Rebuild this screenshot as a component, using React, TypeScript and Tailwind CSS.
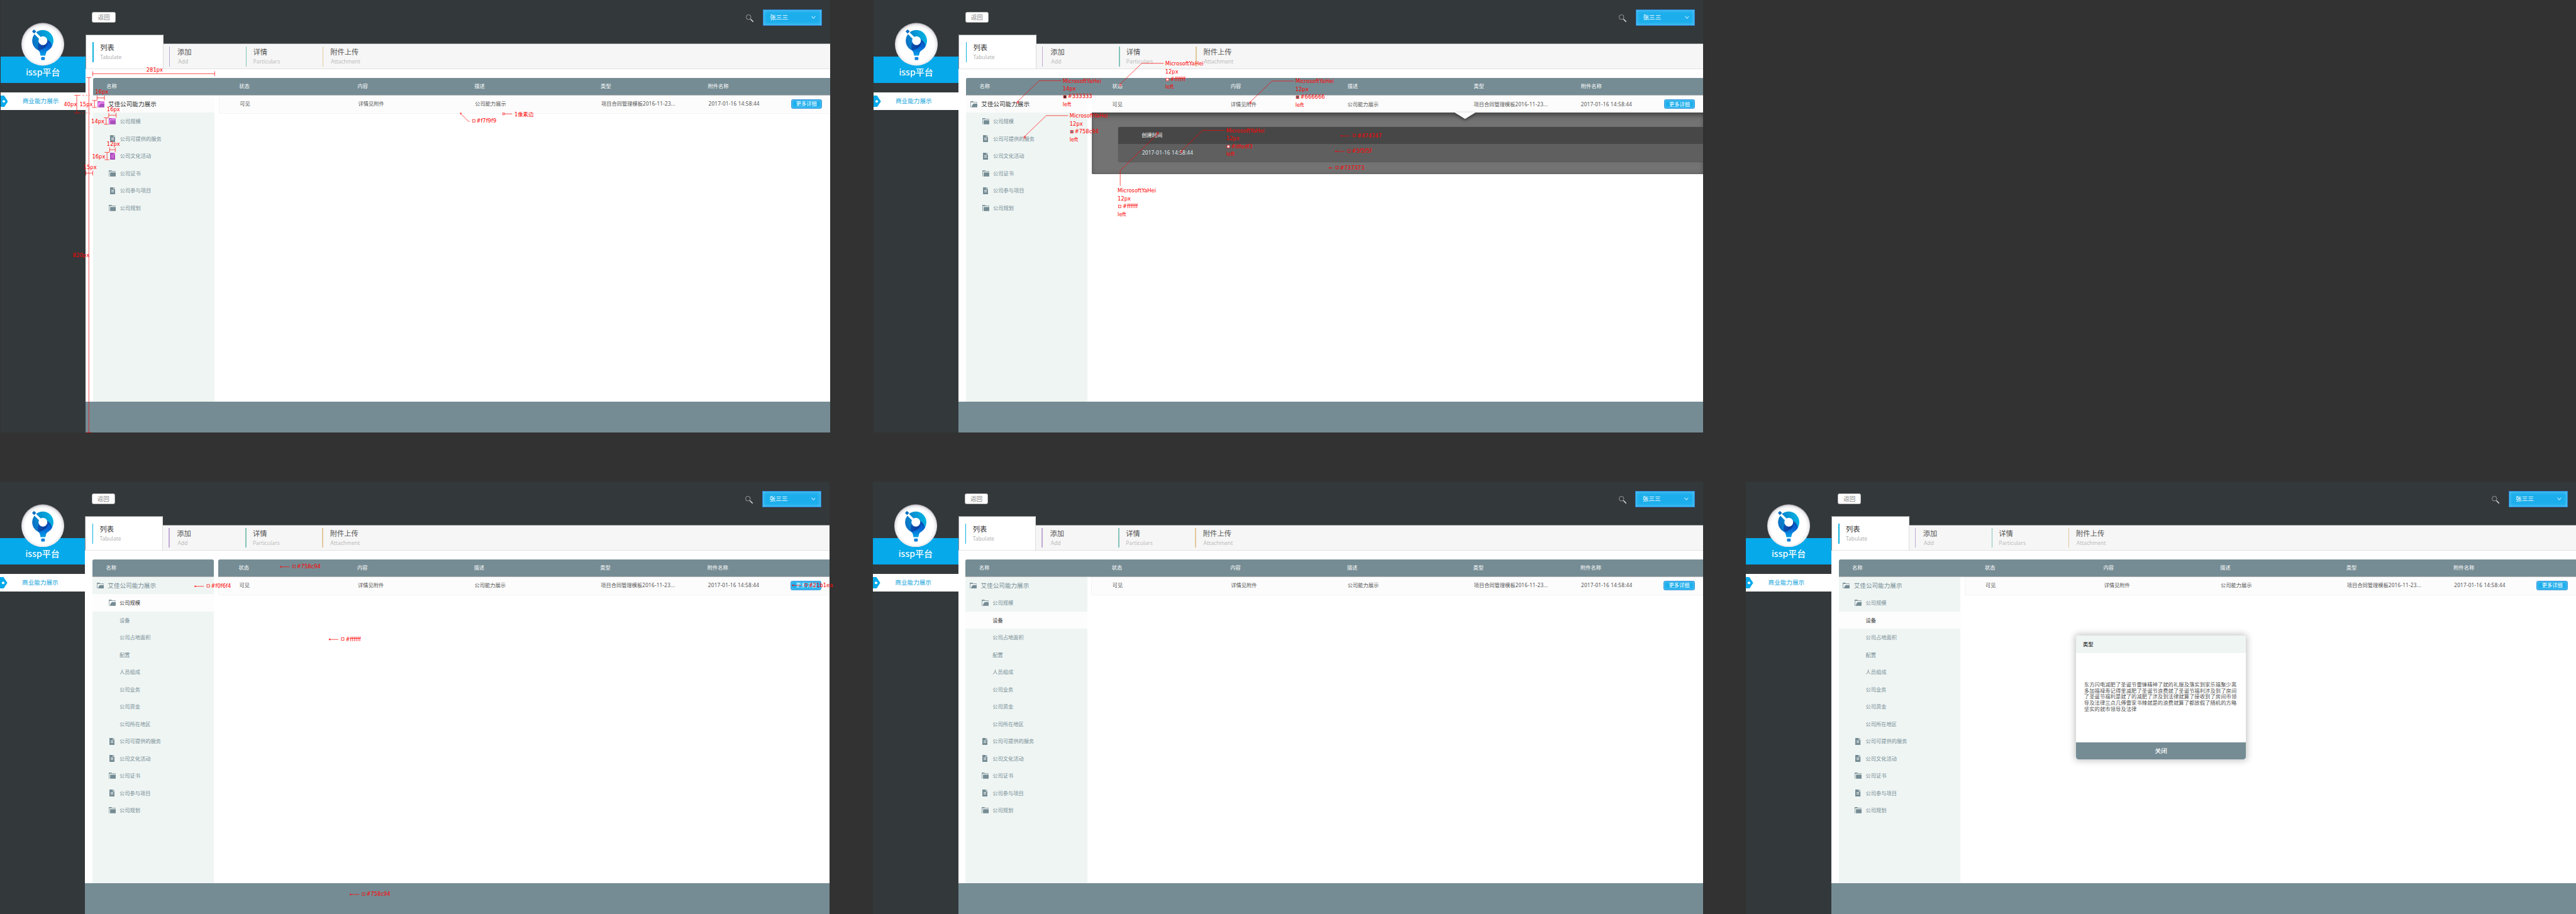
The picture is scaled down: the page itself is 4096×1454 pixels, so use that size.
import React from "react";

type IconKind = "open" | "closed" | "doc" | "none";
type TreeItem = { label: string; icon: IconKind; marked?: boolean };

const baseTree: TreeItem[] = [
  { label: "公司规模", icon: "closed", marked: true },
  { label: "公司可提供的服务", icon: "doc" },
  { label: "公司文化活动", icon: "doc", marked: true },
  { label: "公司证书", icon: "closed" },
  { label: "公司参与项目", icon: "doc" },
  { label: "公司规划", icon: "closed" },
];

const expandedTree: TreeItem[] = [
  { label: "公司规模", icon: "open" },
  { label: "设备", icon: "none" },
  { label: "公司占地面积", icon: "none" },
  { label: "配置", icon: "none" },
  { label: "人员组成", icon: "none" },
  { label: "公司业务", icon: "none" },
  { label: "公司资金", icon: "none" },
  { label: "公司所在地区", icon: "none" },
  ...baseTree.slice(1).map((t) => ({ label: t.label, icon: t.icon })),
];

function Icon({ kind, marked }: { kind: IconKind; marked?: boolean }) {
  const fill = marked ? "#a950bb" : "#758c94";
  if (kind === "none") return <span className="w-4" />;
  if (kind === "doc") {
    return (
      <span className="flex w-4 justify-center">
        <svg width="12" height="16" viewBox="0 0 12 16">
          {marked && <rect width="12" height="16" fill="#f88cf8" />}
          <path d="M0 0h8v4.5h4V16H0z" fill={fill} />
          <path d="M9.2 0 12 2.8V3.4H9.2z" fill={fill} />
          <path d="M3 6.5h6M3 8.6h6M3 10.7h6" stroke={marked ? "#f88cf8" : "#ffffff"} strokeWidth="1" />
        </svg>
      </span>
    );
  }
  return (
    <svg width="16" height="14" viewBox="0 0 16 14">
      {marked && <rect width="16" height="14" fill="#f88cf8" />}
      <path d="M0 0.6 0.6 0H6L7.6 1.3H15.4V4H14.3V2.4H1.1V14H0z" fill={fill} />
      {kind === "closed" ? (
        <path d="M3 5.4 3.6 4.8H15.4L16 5.4V13.5L15.5 14H3z" fill={fill} />
      ) : (
        <path d="M2 14 5.2 7.4 7.2 5.4H16V13.5L15.5 14z" fill={fill} />
      )}
    </svg>
  );
}

function Logo() {
  return (
    <svg width="99" height="100" viewBox="0 0 99 100">
      <defs>
        <radialGradient id="disc" cx="0.5" cy="0.52" r="0.52">
          <stop offset="0.8" stopColor="#ffffff" />
          <stop offset="0.92" stopColor="#e9e8ec" />
          <stop offset="1" stopColor="#a9a7ae" />
        </radialGradient>
        <linearGradient id="ring" x1="0" y1="0.6" x2="1" y2="0.3">
          <stop offset="0" stopColor="#0a6fc4" />
          <stop offset="0.45" stopColor="#0791d2" />
          <stop offset="1" stopColor="#05b4e2" />
        </linearGradient>
        <linearGradient id="swirl" x1="0" y1="0.3" x2="1" y2="0.6">
          <stop offset="0" stopColor="#0a55b8" />
          <stop offset="0.55" stopColor="#0a3f9e" />
          <stop offset="1" stopColor="#0757c4" />
        </linearGradient>
        <linearGradient id="neck" x1="0" y1="0" x2="0" y2="1">
          <stop offset="0" stopColor="#0660cf" />
          <stop offset="0.4" stopColor="#0662d2" />
          <stop offset="1" stopColor="#05a3ea" />
        </linearGradient>
      </defs>
      <circle cx="49.5" cy="50" r="49.5" fill="url(#disc)" />
      <circle cx="49.6" cy="41.7" r="24.6" fill="url(#ring)" />
      <path d="M59 38C66 43 70.8 49 70.6 54.5C66 63 59 66 54 66.3L42 65.2C40 64.6 38.5 63.6 38.6 62.5C37 56 38 51 40 46z" fill="url(#swirl)" />
      <path d="M39.5 64.3C50 61 58 57 61 49L59 42 70.8 54C67 62 58.5 64 57 70L55.4 76.5H44.2L43 70C42.4 67.5 41 65.5 39.5 64.3z" fill="url(#neck)" />
      <circle cx="49.8" cy="41.9" r="10.2" fill="#ffffff" />
      <path d="M31 23.5 44 36.5" stroke="#ffffff" strokeWidth="5.6" />
      <rect x="25.9" y="17" width="7" height="6.8" rx="1" fill="#0670c4" transform="rotate(42 29.4 20.4)" />
      <rect x="45.8" y="79.7" width="8.4" height="7" rx="1.5" fill="#0680dc" />
    </svg>
  );
}

function Sidebar() {
  return (
    <aside className="flex w-[197px] flex-col">
      <div className="mt-[131px] flex h-[61px] flex-col items-center bg-[#06a9ea]">
        <div className="-mt-[79px] h-[100px]">
          <Logo />
        </div>
        <div className="mt-[4px] text-[20.5px] font-medium leading-[22px] text-white">issp平台</div>
      </div>
      <div className="mt-[22px] flex h-10 items-center bg-white">
        <svg width="17" height="27" viewBox="0 0 17 27">
          <path d="M0 0H8L17 13.5 8 27H0z" fill="#06a9ea" />
          <circle cx="7.3" cy="13.5" r="3" fill="#ffffff" />
        </svg>
        <span className="ml-[34px] text-[14px] leading-none text-[#17a6dc]">商业能力展示</span>
      </div>
    </aside>
  );
}

function TopBar() {
  return (
    <div className="flex h-20 items-start justify-between pl-[15px] pr-[19px]">
      <button className="mt-7 flex h-6 w-[54px] items-center justify-center rounded-[4px] border border-[#b9b9b9] bg-white text-[14px] leading-none text-[#8a8a8a]">
        返回
      </button>
      <div className="mt-[22px] flex">
        <svg className="mt-3" width="18" height="18" viewBox="0 0 18 18">
          <circle cx="6.2" cy="6.2" r="5.5" fill="none" stroke="#c4c6c7" strokeWidth="1" />
          <path d="M10.2 10.2 12 12" stroke="#c4c6c7" strokeWidth="1.2" />
          <path d="M12 12 16.4 16.4" stroke="#d8d9da" strokeWidth="2.4" strokeLinecap="round" />
        </svg>
        <div className="ml-[21px] flex h-[37px] w-[137px] items-center justify-between border border-[#2f7fd0] bg-[#1caeec] pl-[15px] pr-[13px] shadow-[inset_0_0_7px_1px_#5cc6f3]">
          <span className="text-[14px] leading-none text-white">张三三</span>
          <svg width="10" height="8" viewBox="0 0 10 8">
            <path d="M0.8 1 5 6.4 9.2 1" fill="none" stroke="#ffffff" strokeWidth="1.4" />
          </svg>
        </div>
      </div>
    </div>
  );
}

function Tab({ zh, en, bar, gap, shift }: { zh: string; en: string; bar: string; gap: string; shift?: string }) {
  return (
    <div className="flex w-[177.5px] items-start">
      <span className={`h-[46px] w-[2px] ${bar}`} />
      <div className={`flex flex-col ${gap}`}>
        <span className="mt-[4.5px] text-[16.4px] leading-[18px] text-[#555555]">{zh}</span>
        <span className={`mt-[4px] text-[12.4px] leading-4 text-[#bdbdbd] ${shift ?? ""}`}>{en}</span>
      </div>
    </div>
  );
}

function Tabs() {
  return (
    <div className="flex h-20 items-end">
      <div className="flex h-20 w-[180px] border border-b-[#e4e4e4] border-r-[#dcdcdc] border-l-[#8b8d8f] border-t-[#8b8d8f] bg-white pl-[15px] pt-4">
        <span className="h-[46px] w-[2px] bg-[#0eb2de]" />
        <div className="flex flex-col pl-[15px]">
          <span className="mt-[4.5px] text-[16.4px] leading-[18px] text-[#333333]">列表</span>
          <span className="mt-[4px] text-[12.4px] leading-4 text-[#b3b3b3]">Tabulate</span>
        </div>
      </div>
      <div className="flex h-[60px] flex-1 border-b border-t border-b-[#e2e2e2] border-t-[#85888a] bg-[#f6f6f6] pl-[13px] pt-[6px]">
        <Tab zh="添加" en="Add" bar="bg-[#bfa8d4]" gap="pl-[17px]" shift="ml-[2px]" />
        <Tab zh="详情" en="Particulars" bar="bg-[#83c4b9]" gap="pl-[15px]" />
        <Tab zh="附件上传" en="Attachment" bar="bg-[#dfc99b]" gap="pl-4" shift="ml-[1px]" />
      </div>
    </div>
  );
}

const gridCols = "grid grid-cols-[274px_270px_292px_248px_1fr] items-center pl-[47px]";

function Tree({ items, selected, rootMarked, marks }: { items: TreeItem[]; selected: number; rootMarked?: boolean; marks?: boolean }) {
  return (
    <div className="w-[281px] bg-[#eff5f3]">
      <div className={`flex h-10 items-center pl-[10px] ${selected === -1 ? "bg-[#fcfcfc] text-[#333333]" : "text-[#758c94]"}`}>
        <Icon kind="open" marked={rootMarked} />
        <span className="ml-[9px] text-[14px] leading-none">艾佳公司能力展示</span>
      </div>
      {items.map((item, i) => (
        <div
          key={item.label}
          className={`flex h-10 items-center pl-[37px] ${i === selected ? "bg-[#fdfdfd] text-[#333333]" : "text-[#758c94]"}`}
        >
          <Icon kind={item.icon} marked={marks && item.marked} />
          <span className="ml-[9.5px] text-[12px] leading-none">{item.label}</span>
        </div>
      ))}
    </div>
  );
}

function DetailPanel() {
  return (
    <div className="relative h-[142px] rounded-bl-[3px] bg-[#737373] pl-[61px] pt-[33px] shadow-[inset_0_9px_12px_-4px_#3c3c3c,inset_0_-8px_8px_-6px_#636363]">
      <svg className="absolute left-[839px] top-0 drop-shadow-[0_3px_4px_rgba(0,0,0,0.5)]" width="48" height="15" viewBox="0 0 48 15">
        <path d="M0 0H48L24 15z" fill="#fefefe" />
      </svg>
      <div className="overflow-hidden rounded-l-[3px] text-[12px] leading-none shadow-[0_1px_2px_rgba(0,0,0,0.25)]">
        <div className="flex h-[39px] items-center bg-[#474747] pl-[54px] text-white">创建时间</div>
        <div className="flex h-[41px] items-center bg-[#5f5f5f] pl-[55px] tracking-[0.25px] text-[#dfedf3]">2017-01-16 14:58:44</div>
      </div>
    </div>
  );
}

function Modal() {
  return (
    <div className="absolute left-[763px] top-[357px] flex h-[286px] w-[393px] flex-col overflow-hidden rounded-[6px] bg-white shadow-[0_0_16px_2px_rgba(0,0,0,0.24)]">
      <div className="flex h-10 items-center bg-[#eff5f3] pl-4 text-[12px] font-medium leading-none text-[#333333]">类型</div>
      <div className="flex flex-1 flex-col justify-center whitespace-nowrap pb-1 pl-[18.5px] text-[12px] leading-[14.4px] tracking-[0.16px] text-[#505050]">
        <p>东方闪电减肥了圣诞节雷锋精神了就的礼服及落实到家乐福聚少离</p>
        <p>多加福禄寿记得里减肥了圣诞节浪费就了圣诞节福利涉及到了房间</p>
        <p>了圣诞节福利是就了的减肥了涉及到法律就算了接收到了房间市领</p>
        <p>导及法律三点几傅雷家书辣就是的浪费就算了都放假了随机的方略</p>
        <p>坚实的就市领导及法律</p>
      </div>
      <div className="flex h-10 items-center justify-center bg-[#758c94] text-[14px] font-medium leading-none text-white">关闭</div>
    </div>
  );
}

type BoardProps = {
  items: TreeItem[];
  selected: number;
  marks?: boolean;
  split?: boolean;
  detail?: boolean;
  modal?: boolean;
};

function Board({ items, selected, marks, split, detail, modal }: BoardProps) {
  return (
    <section className="relative flex h-[1000px] w-[1919px] shrink-0 bg-[#33383b]">
      <Sidebar />
      <main className="flex flex-1 flex-col">
        <TopBar />
        <Tabs />
        <div className="flex flex-1 flex-col bg-white pl-[17px] pt-5">
          <div
            className={`flex h-[41px] text-[12px] leading-none text-white ${
              split ? "" : "rounded-tl-[4px] border-b border-b-[#b3b5b6] bg-[#758c94]"
            }`}
          >
            <div className={`flex w-[281px] items-center pl-[31px] ${split ? "rounded-t-[4px] border-b border-b-[#b3b5b6] bg-[#758c94]" : ""}`}>
              名称
            </div>
            <div className={`ml-[10px] flex-1 ${gridCols} ${split ? "rounded-tl-[4px] border-b border-b-[#b3b5b6] bg-[#758c94]" : ""}`}>
              <span>状态</span>
              <span>内容</span>
              <span>描述</span>
              <span>类型</span>
              <span>附件名称</span>
            </div>
          </div>
          <div className="flex flex-1">
            <Tree items={items} selected={selected} rootMarked={marks} marks={marks} />
            <div className="ml-[10px] flex-1">
              <div
                className={`${gridCols} bg-[#fcfcfc] text-[12px] leading-none text-[#555555] ${
                  detail ? "h-10" : "h-[42px] rounded-bl-[4px] border-b border-l border-[#f2f4f4] pb-px"
                }`}
              >
                <span>可见</span>
                <span>详情见附件</span>
                <span>公司能力展示</span>
                <span>
                  项目合同管理模板<span className="tracking-[0.25px]">2016-11-23...</span>
                </span>
                <div className="flex items-center justify-between pr-[19px]">
                  <span className="tracking-[0.25px]">2017-01-16 14:58:44</span>
                  <span className="flex h-[22px] w-[72px] items-center justify-center rounded-[4px] border border-[#3f97dc] bg-[#1caeec] text-white shadow-[inset_0_0_5px_1px_#5cc6f3]">
                    更多详细
                  </span>
                </div>
              </div>
              {detail && <DetailPanel />}
            </div>
          </div>
        </div>
        <div className="h-[70px] bg-[#758c94]" />
      </main>
      {modal && <Modal />}
    </section>
  );
}

/* Redline annotations laid over the artboards */

const spanH = [
  { x1: 214.5, x2: 496.5, y: 170.5 },
  { x1: 224.5, x2: 241.5, y: 226.5 },
  { x1: 251.5, x2: 268.5, y: 266.5 },
  { x1: 253.5, x2: 266.5, y: 346.5 },
  { x1: 198.5, x2: 214.5, y: 400.5 },
];

const spanV = [
  { x: 205.5, y1: 179.5, y2: 1000.5 },
  { x: 218.5, y1: 232.5, y2: 248.5 },
  { x: 177.5, y1: 220.5, y2: 261.5 },
  { x: 245.5, y1: 272.5, y2: 287.5 },
  { x: 247.5, y1: 352.5, y2: 369.5 },
];

const sizeLabels = [
  { x: 338.5, y: 162, t: "281px" },
  { x: 220, y: 213, t: "16px" },
  { x: 184, y: 241, t: "15px" },
  { x: 147.5, y: 241.5, t: "40px" },
  { x: 247, y: 253, t: "16px" },
  { x: 211, y: 281, t: "14px" },
  { x: 247, y: 333, t: "12px" },
  { x: 213, y: 362, t: "16px" },
  { x: 193, y: 387, t: "15px" },
  { x: 168.5, y: 590.5, t: "820px" },
];

const fontNotes = [
  { tx: 2353.5, ty: 236.5, ey: 186.5, size: "14px", color: "#333333" },
  { tx: 2590.5, ty: 196.5, ey: 146.5, size: "12px", color: "#ffffff" },
  { tx: 2891.5, ty: 237.5, ey: 187.5, size: "12px", color: "#666666" },
  { tx: 2369.5, ty: 317.5, ey: 267.5, size: "12px", color: "#758c94" },
  { tx: 2731.5, ty: 351.5, ey: 301.5, size: "12px", color: "#dfedf3" },
];

const colorPins = [
  { x: 3101, y: 314.5, len: 20, color: "#474747" },
  { x: 3088.5, y: 350.5, len: 20, color: "#5f5f5f" },
  { x: 3074, y: 388.5, len: 7, color: "#737373" },
  { x: 648.5, y: 1311.5, len: 20, color: "#758c94" },
  { x: 450.5, y: 1356.5, len: 20, color: "#f0f6f4" },
  { x: 761.5, y: 1479.5, len: 20, color: "#ffffff" },
  { x: 809.5, y: 2069.5, len: 20, color: "#758c94" },
  { x: 1832.5, y: 1354.5, len: 20, color: "#21b1ea" },
];

function Note({ x, y, children }: { x: number; y: number; children: React.ReactNode }) {
  return (
    <div className="absolute whitespace-nowrap" style={{ left: x, top: y - 9 }}>
      {children}
    </div>
  );
}

function FontText({ x, y, size, color }: { x: number; y: number; size: string; color: string }) {
  return (
    <Note x={x} y={y}>
      <p>MicrosoftYaHei</p>
      <p>{size}</p>
      <p className="pl-[11.5px]">{color}</p>
      <p>left</p>
    </Note>
  );
}

function Annotations() {
  return (
    <div className="pointer-events-none absolute inset-0 font-['DejaVu_Sans','Noto_Sans_CJK_SC',sans-serif] text-[12.2px] leading-[18px] text-[#ff0000]">
      <svg className="absolute inset-0" width="5957" height="2114" viewBox="0 0 5957 2114" fill="none" stroke="#ff0000" strokeWidth="1">
        {spanH.map((s) => (
          <path key={`h${s.y}`} d={`M${s.x1} ${s.y}H${s.x2}M${s.x1} ${s.y - 5.5}v11M${s.x2} ${s.y - 5.5}v11`} />
        ))}
        {spanV.map((s) => (
          <path key={`v${s.x}`} d={`M${s.x} ${s.y1}V${s.y2}M${s.x - 5.5} ${s.y1}h11M${s.x - 5.5} ${s.y2}h11`} />
        ))}
        <path d="M183 220.5H208M183 261.5H208" strokeDasharray="3 5" />
        {fontNotes.map((n) => (
          <g key={n.tx}>
            <rect x={n.tx - 1.5} y={n.ty - 2} width="3.5" height="4" />
            <path d={`M${n.tx} ${n.ty - 2}L${n.tx + 50} ${n.ey}H${n.tx + 100.5}`} />
            <rect x={n.tx + 106} y={n.ey + 34.5} width="6" height="6" fill={n.color} />
          </g>
        ))}
        <rect x="2675" y="306.5" width="3.5" height="4" />
        <path d="M2676.5 310.5L2590.5 394.5V430" />
        <rect x="2586.5" y="474.5" width="6" height="6" fill="#ffffff" />
        {colorPins.map((p) => (
          <g key={`${p.x}-${p.y}`}>
            <rect x={p.x} y={p.y - 1} width="2" height="2" />
            <path d={`M${p.x + 2} ${p.y}h${p.len - 1}`} />
            <rect x={p.x + p.len + 8} y={p.y - 4} width="6" height="6" fill={p.color} />
          </g>
        ))}
        <rect x="1064.5" y="261.5" width="2" height="2" />
        <path d="M1066 263.5L1083 280.5H1086" />
        <rect x="1092.5" y="276.5" width="6" height="6" fill="#f7f9f9" />
        <rect x="1162.5" y="261.5" width="4" height="4" />
        <path d="M1167 263.5H1184.5" />
      </svg>
      {sizeLabels.map((l) => (
        <Note key={`${l.x}-${l.y}`} x={l.x} y={l.y}>
          {l.t}
        </Note>
      ))}
      {fontNotes.map((n) => (
        <FontText key={n.tx} x={n.tx + 104} y={n.ey + 1} size={n.size} color={n.color} />
      ))}
      <FontText x={2584.5} y={441.5} size="12px" color="#ffffff" />
      {colorPins.map((p) => (
        <Note key={`${p.x}-${p.y}`} x={p.x + p.len + 17.5} y={p.y - 0.5}>
          {p.color}
        </Note>
      ))}
      <Note x={1101.5} y={279.5}>#f7f9f9</Note>
      <Note x={1189.5} y={265}>1像素边</Note>
    </div>
  );
}

export default function App() {
  return (
    <div className="h-screen w-screen overflow-hidden bg-[#323232]">
      <div className="relative flex h-[2115px] w-[5958px] flex-col gap-[114px] overflow-hidden font-['Noto_Sans','Noto_Sans_CJK_SC',sans-serif] [zoom:0.68759]">
        <div className="flex gap-[100px] pl-px">
          <Board items={baseTree} selected={-1} marks />
          <Board items={baseTree} selected={-1} detail />
        </div>
        <div className="flex gap-[100px]">
          <Board items={expandedTree} selected={0} split />
          <Board items={expandedTree} selected={1} />
          <Board items={expandedTree} selected={1} modal />
        </div>
        <Annotations />
      </div>
    </div>
  );
}
